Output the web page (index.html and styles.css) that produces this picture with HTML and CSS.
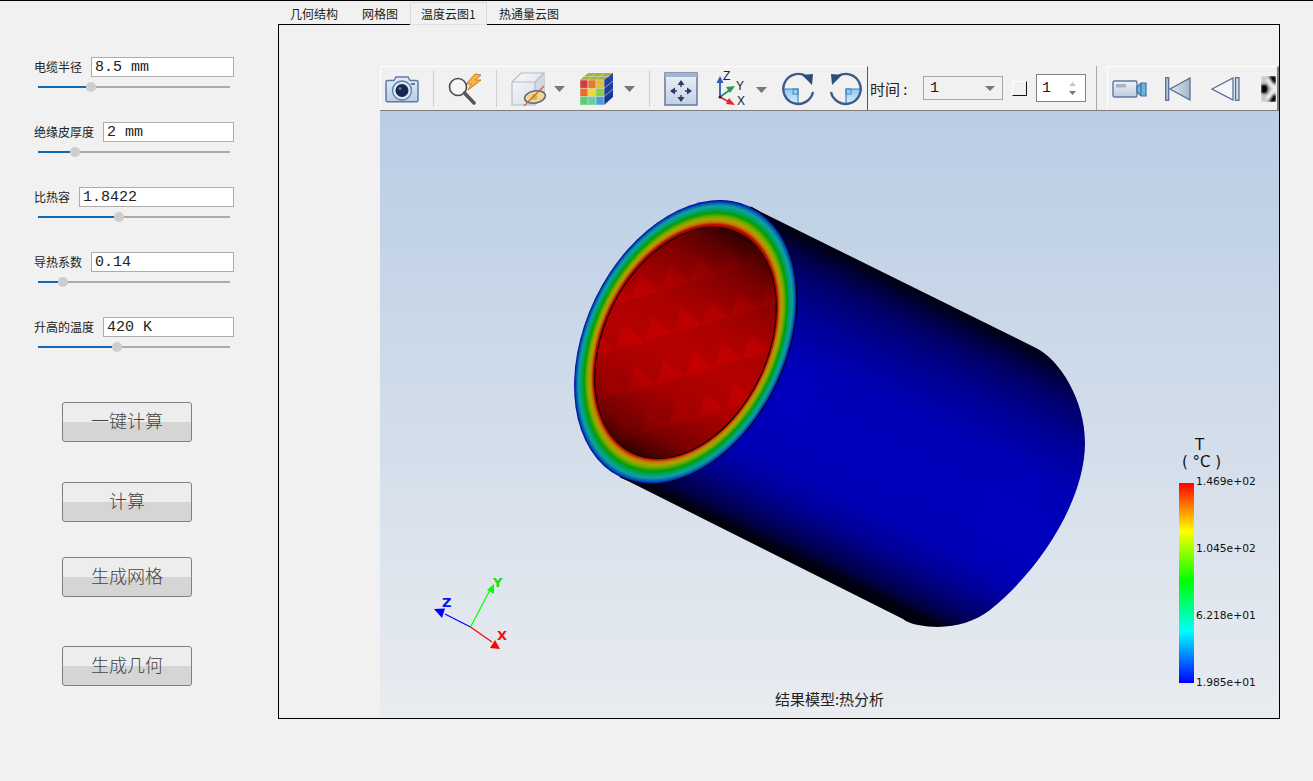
FILE: index.html
```html
<!DOCTYPE html>
<html lang="zh">
<head>
<meta charset="utf-8">
<title>热分析</title>
<link rel="stylesheet" href="styles.css">
</head>
<body>
<div class="app">
  <aside class="sidebar">
    <div class="param">
      <div class="param-row"><label class="param-label">电缆半径</label><div class="param-input">8.5 mm</div></div>
      <div class="slider"><div class="slider-fill" style="width:53px"><span class="slider-thumb"></span></div></div>
    </div>
    <div class="param">
      <div class="param-row"><label class="param-label">绝缘皮厚度</label><div class="param-input">2 mm</div></div>
      <div class="slider"><div class="slider-fill" style="width:37px"><span class="slider-thumb"></span></div></div>
    </div>
    <div class="param">
      <div class="param-row"><label class="param-label">比热容</label><div class="param-input">1.8422</div></div>
      <div class="slider"><div class="slider-fill" style="width:81px"><span class="slider-thumb"></span></div></div>
    </div>
    <div class="param">
      <div class="param-row"><label class="param-label">导热系数</label><div class="param-input">0.14</div></div>
      <div class="slider"><div class="slider-fill" style="width:25px"><span class="slider-thumb"></span></div></div>
    </div>
    <div class="param">
      <div class="param-row"><label class="param-label">升高的温度</label><div class="param-input">420 K</div></div>
      <div class="slider"><div class="slider-fill" style="width:79px"><span class="slider-thumb"></span></div></div>
    </div>
    <button class="action action-first">一键计算</button>
    <button class="action action-second">计算</button>
    <button class="action action-third">生成网格</button>
    <button class="action action-fourth">生成几何</button>
  </aside>

  <main class="main">
    <nav class="tabs">
      <span class="tab">几何结构</span>
      <span class="tab">网格图</span>
      <span class="tab tab-active">温度云图1</span>
      <span class="tab">热通量云图</span>
    </nav>
    <section class="pane">
      <div class="viewer">
        <div class="toolbar">
          <div class="tb-main">
            <svg class="icon" width="34" height="28" viewBox="0 0 34 28">
              <defs><linearGradient id="camBody" x1="0" y1="0" x2="0" y2="1"><stop offset="0" stop-color="#e4edf8"/><stop offset="1" stop-color="#b9cde8"/></linearGradient></defs>
              <path d="M2.500 5.500H9L11 2H23L25 5.500H31.500Q33 5.500 33 7V25Q33 26.800 31.500 26.800H2.500Q1 26.800 1 25V7Q1 5.500 2.500 5.500Z" fill="url(#camBody)" stroke="#5d7ba3" stroke-width="1.500"/>
              <circle cx="17" cy="15.500" r="9.500" fill="#dbe6f4" stroke="#5d7ba3" stroke-width="1.300"/>
              <circle cx="17" cy="15.500" r="6.500" fill="#15264f"/>
              <circle cx="15" cy="13.500" r="1.500" fill="#5d7ba3"/>
              <rect x="26" y="8" width="4" height="2" fill="#5d7ba3"/>
            </svg>
            <span class="tb-sep"></span>
            <svg class="icon" width="34" height="32" viewBox="0 0 34 32">
              <path d="M27 1L18 11H23L20 17L33 7H27L33 2Z" fill="#f6b54a" stroke="#d07c1c" stroke-width="1"/>
              <circle cx="10" cy="14" r="8.500" fill="#f4f6f8" stroke="#4c4c4c" stroke-width="1.600"/>
              <path d="M16.500 20L26 30" stroke="#555" stroke-width="3.600" stroke-linecap="round"/>
            </svg>
            <span class="tb-sep"></span>
            <svg class="icon" width="56" height="34" viewBox="0 0 56 34">
              <defs><linearGradient id="boxFace" x1="0" y1="0" x2="1" y2="1"><stop offset="0" stop-color="#f8f9fb"/><stop offset="1" stop-color="#d5dae2"/></linearGradient></defs>
              <path d="M1 10L10 1H33V23L24 33H1Z" fill="url(#boxFace)" stroke="#b4bcca" stroke-width="1.200"/>
              <path d="M24 10L33 1V23L24 33Z" fill="#d2d8e2"/>
              <path d="M1 10H24V33M24 10L33 1" fill="none" stroke="#b4bcca" stroke-width="1.200"/>
              <ellipse cx="24" cy="25" rx="10.500" ry="6" transform="rotate(-10 24 25)" fill="#f0d890" stroke="#54688a" stroke-width="1.500"/>
              <circle cx="23.500" cy="25" r="3" fill="#d8b45a"/>
              <path d="M13 34L33 14" stroke="#d8602c" stroke-width="1.300"/>
              <path d="M43 14H54L48.500 20Z" fill="#777"/>
            </svg>
            <svg class="icon icon-cube" width="55" height="32" viewBox="0 0 55 32">
              <defs><linearGradient id="cubeSide" x1="0" y1="0" x2="0" y2="1"><stop offset="0" stop-color="#2248b0"/><stop offset="1" stop-color="#123090"/></linearGradient></defs>
              <path d="M0 7L8 0H33L24 7Z" fill="#a8b040"/>
              <path d="M24 7L33 0V24L24 32Z" fill="url(#cubeSide)"/>
              <g stroke="#c8d4c0" stroke-width=".7">
                <rect x="0" y="7" width="8" height="8.300" fill="#d83838"/><rect x="8" y="7" width="8" height="8.300" fill="#e8782c"/><rect x="16" y="7" width="8" height="8.300" fill="#e0c030"/>
                <rect x="0" y="15.300" width="8" height="8.300" fill="#f0682c"/><rect x="8" y="15.300" width="8" height="8.300" fill="#f0d838"/><rect x="16" y="15.300" width="8" height="8.300" fill="#88d040"/>
                <rect x="0" y="23.600" width="8" height="8.400" fill="#58d070"/><rect x="8" y="23.600" width="8" height="8.400" fill="#68d0a0"/><rect x="16" y="23.600" width="8" height="8.400" fill="#40a0e0"/>
                <path d="M8 7L16 0M16 7L24 0M4 3.500H29M24 15.300L33 8M24 23.600L33 16" fill="none"/>
              </g>
              <path d="M44 13H55L49.500 19Z" fill="#777"/>
            </svg>
            <span class="tb-sep"></span>
            <svg class="icon" width="34" height="34" viewBox="0 0 34 34">
              <defs><linearGradient id="fitBg" x1="0" y1="0" x2="0" y2="1"><stop offset="0" stop-color="#eef2f8"/><stop offset="1" stop-color="#c2cfe4"/></linearGradient></defs>
              <rect x="1" y="1" width="32" height="32" fill="url(#fitBg)" stroke="#64799e" stroke-width="1.500"/>
              <rect x="1" y="1" width="32" height="4" fill="#a4b4d0"/>
              <path d="M17 10V28M8 19H26" stroke="#283c62" stroke-width="1.400" stroke-dasharray="5 8 5"/>
              <path d="M17 8L13.500 13H20.500ZM17 30L13.500 25H20.500ZM6 19L11 15.500V22.500ZM28 19L23 15.500V22.500Z" fill="#283c62"/>
            </svg>
            <svg class="icon icon-axes" width="145" height="34" viewBox="0 0 145 34">
              <defs><linearGradient id="rotFill" x1="0" y1="0" x2="0" y2="1"><stop offset="0" stop-color="#8cc8f0"/><stop offset="1" stop-color="#dcf0fc"/></linearGradient></defs>
              <path d="M3 25V8" stroke="#2c5cb8" stroke-width="1.800"/><path d="M3 4L-.500 11H6.500Z" fill="#2c5cb8"/>
              <path d="M3 25L14 17" stroke="#2a9a50" stroke-width="2"/><path d="M18 14L9 15L13 21Z" fill="#2a9a50"/>
              <path d="M3 25L14 31" stroke="#e02828" stroke-width="1.800"/><path d="M18 33L9 32L12 26Z" fill="#e02828"/>
              <circle cx="3" cy="25" r="1.500" fill="#222"/>
              <text class="axis-mini" x="6" y="8">Z</text><text class="axis-mini" x="19" y="18">Y</text><text class="axis-mini" x="20" y="33">X</text>
              <path d="M39 15H50L44.500 21Z" fill="#777"/>
              <g>
                <path d="M66 17A15 15 0 0 0 81 32V17Z" fill="url(#rotFill)"/>
                <path d="M66 17H81V32" fill="none" stroke="#3f86c4" stroke-width="1.200"/>
                <rect x="76" y="17" width="5" height="5" fill="none" stroke="#3f86c4"/>
                <path d="M96 20A15 15 0 1 1 89 4" fill="none" stroke="#3d5d88" stroke-width="2.400"/>
                <path d="M85 3L96 2L95 13Z" fill="#2e4c78"/>
              </g>
              <g transform="translate(210 0) scale(-1 1)">
                <path d="M66 17A15 15 0 0 0 81 32V17Z" fill="url(#rotFill)"/>
                <path d="M66 17H81V32" fill="none" stroke="#3f86c4" stroke-width="1.200"/>
                <rect x="76" y="17" width="5" height="5" fill="none" stroke="#3f86c4"/>
                <path d="M96 20A15 15 0 1 1 89 4" fill="none" stroke="#3d5d88" stroke-width="2.400"/>
                <path d="M85 3L96 2L95 13Z" fill="#2e4c78"/>
              </g>
            </svg>
          </div>
          <div class="tb-time">
            <span class="time-label">时间 :</span>
            <div class="combo"><span>1</span><i class="combo-arrow"></i></div>
            <span class="check"></span>
            <div class="spin"><span>1</span>
              <svg class="spin-arrows" width="9" height="16" viewBox="0 0 9 16"><path d="M4.500 1L8 5H1Z" fill="#c4c4c4"/><path d="M4.500 14L8 10H1Z" fill="#777"/></svg>
            </div>
            <span class="tb-sep tb-sep-end"></span>
          </div>
          <div class="tb-play">
            <svg class="icon" width="35" height="20" viewBox="0 0 35 20">
              <defs><linearGradient id="camcord" x1="0" y1="0" x2="0" y2="1"><stop offset="0" stop-color="#f0f3f8"/><stop offset="1" stop-color="#bccbe0"/></linearGradient></defs>
              <rect x="1" y="2" width="24" height="16" rx="1.500" fill="url(#camcord)" stroke="#5a7aa4" stroke-width="1.400"/>
              <rect x="4" y="5" width="10" height="3.500" fill="#a8b4c4"/>
              <path d="M25 8L29 4H34V17H29L25 13Z" fill="#64b8e4" stroke="#4c6c98" stroke-width="1.200"/>
              <path d="M29 4V17" stroke="#4c6c98" stroke-width="1.200"/>
            </svg>
            <svg class="icon icon-first" width="26" height="24" viewBox="0 0 26 24">
              <defs><linearGradient id="triGray" x1="0" y1="0" x2="1" y2="0"><stop offset="0" stop-color="#e0e6ee"/><stop offset="1" stop-color="#a8b6c8"/></linearGradient></defs>
              <rect x=".7" y=".7" width="3" height="22.600" fill="#b4c4dc" stroke="#4a6a94" stroke-width="1.200"/>
              <path d="M5 12L25 1V23Z" fill="url(#triGray)" stroke="#4a6a94" stroke-width="1.200"/>
            </svg>
            <svg class="icon icon-prev" width="29" height="24" viewBox="0 0 29 24">
              <path d="M1 12L22 1V23Z" fill="#f4f6f9" stroke="#4a6a94" stroke-width="1.200"/>
              <rect x="24.500" y=".7" width="3.500" height="22.600" fill="#d0dae8" stroke="#4a6a94" stroke-width="1.200"/>
            </svg>
            <svg class="icon icon-next" width="15" height="26" viewBox="0 0 15 26">
              <defs><filter id="soft" x="-20%" y="-20%" width="140%" height="140%"><feGaussianBlur stdDeviation=".8"/></filter></defs>
              <g filter="url(#soft)">
                <rect width="15" height="26" fill="#c8c8c8"/>
                <path d="M7 0H15V8L12 8ZM7 26H15V18L12 18ZM0 8H6L8 13L6 18H0Z" fill="#050505"/>
                <path d="M6 3L14 13L6 23" fill="none" stroke="#f4f4f4" stroke-width="3"/>
              </g>
            </svg>
          </div>
        </div>

        <div class="view">
          <svg class="scene" viewBox="380 111 899 606" width="899" height="606">
            <defs>
              <linearGradient id="shell" gradientUnits="userSpaceOnUse" x1="751" y1="207" x2="620" y2="477">
                <stop offset="0" stop-color="#00000c"/><stop offset=".03" stop-color="#000024"/>
                <stop offset=".07" stop-color="#000048"/><stop offset=".12" stop-color="#000068"/>
                <stop offset=".18" stop-color="#000080"/><stop offset=".25" stop-color="#000098"/>
                <stop offset=".32" stop-color="#0000a8"/><stop offset=".40" stop-color="#0000b6"/>
                <stop offset=".55" stop-color="#0000bc"/><stop offset=".72" stop-color="#0000b8"/>
                <stop offset=".80" stop-color="#0000a0"/><stop offset=".85" stop-color="#000088"/>
                <stop offset=".90" stop-color="#000068"/><stop offset=".95" stop-color="#000040"/>
                <stop offset=".98" stop-color="#000014"/><stop offset="1" stop-color="#00000a"/>
              </linearGradient>
              <radialGradient id="ring">
                <stop offset=".815" stop-color="#a00000"/>
                <stop offset=".828" stop-color="#b81000"/>
                <stop offset=".845" stop-color="#c07800"/>
                <stop offset=".865" stop-color="#b0a000"/>
                <stop offset=".885" stop-color="#70a800"/>
                <stop offset=".91" stop-color="#00a000"/>
                <stop offset=".93" stop-color="#00a060"/>
                <stop offset=".958" stop-color="#10a0a0"/>
                <stop offset=".98" stop-color="#0060b0"/>
                <stop offset="1" stop-color="#0000a0"/>
              </radialGradient>
              <linearGradient id="bore" gradientUnits="userSpaceOnUse" x1="746" y1="226" x2="626" y2="462">
                <stop offset="0" stop-color="#200000"/><stop offset=".05" stop-color="#3c0000"/>
                <stop offset=".12" stop-color="#680000"/><stop offset=".20" stop-color="#8c0000"/>
                <stop offset=".30" stop-color="#a80000"/><stop offset=".40" stop-color="#bc0000"/>
                <stop offset=".55" stop-color="#c40000"/><stop offset=".68" stop-color="#b80000"/>
                <stop offset=".78" stop-color="#9c0000"/><stop offset=".86" stop-color="#800000"/>
                <stop offset=".93" stop-color="#500000"/><stop offset="1" stop-color="#100000"/>
              </linearGradient>
              <pattern id="facets" patternUnits="userSpaceOnUse" width="30" height="44" patternTransform="rotate(-16)">
                <path d="M0 0H30L15 22ZM15 22H45L30 44H0Z" fill="#000" fill-opacity=".08"/>
                <path d="M-15 22H15L0 44Z" fill="#000" fill-opacity=".08"/>
              </pattern>
              <clipPath id="boreClip"><ellipse cx="685.500" cy="343" rx="122" ry="81.800" transform="rotate(-64.200 685.500 343)"/></clipPath>
              <linearGradient id="legend" x1="0" y1="0" x2="0" y2="1">
                <stop offset="0" stop-color="#ff0000"/><stop offset=".24" stop-color="#ffff00"/>
                <stop offset=".49" stop-color="#00ff00"/><stop offset=".74" stop-color="#00ffff"/>
                <stop offset="1" stop-color="#0000ff"/>
              </linearGradient>
            </defs>

            <path d="M751 207L1036 348C1060 360 1085 400 1085 443C1085 500 1040 570 990 610C970 625 945 630 918 625Q908 623 903 619L620 477Z" fill="url(#shell)"/>
            <path d="M1000 440L1050 480L1040 550L1000 590L960 560L990 500Z" fill="#0000c4" fill-opacity=".25"/>
            <path d="M790 350L830 370L800 420L780 410Z" fill="#0000c8" fill-opacity=".3"/>

            <ellipse cx="685.500" cy="342" rx="150" ry="100.300" transform="rotate(-64.200 685.500 342)" fill="url(#ring)"/>
            <path d="M-150 0A150 100.300 0 0 0 150 0" transform="translate(685.500 342) rotate(-64.200)" fill="none" stroke="#000010" stroke-width="1"/>
            <g clip-path="url(#boreClip)">
              <rect x="580" y="220" width="210" height="245" fill="url(#bore)"/>
              <rect x="580" y="220" width="210" height="245" fill="url(#facets)"/>
            </g>
            <ellipse cx="685.500" cy="343" rx="122" ry="81.800" transform="rotate(-64.200 685.500 343)" fill="none" stroke="#100000" stroke-width="1.100"/>

            <g class="triad">
              <path d="M470.500 627L445 614" stroke="#0000ff"/>
              <path d="M434 609L445 608.500L442 618Z" fill="#0000ff"/>
              <path d="M470.500 627L490 590" stroke="#00ff00"/>
              <path d="M494 584L487 590L494 594Z" fill="#00ff00"/>
              <path d="M470.500 627L492 642" stroke="#ff0000"/>
              <path d="M500 649L490 648L495 640Z" fill="#ff0000"/>
              <text class="axis-z" x="442" y="607">Z</text>
              <text class="axis-y" x="493" y="587">Y</text>
              <text class="axis-x" x="497" y="640">X</text>
            </g>

            <text class="legend-title" x="1195" y="450">T</text>
            <text class="legend-title" x="1182" y="467">( °C )</text>
            <rect x="1179" y="483" width="15" height="200" fill="url(#legend)"/>
            <text class="legend-tick" x="1196" y="485">1.469e+02</text>
            <text class="legend-tick" x="1196" y="552">1.045e+02</text>
            <text class="legend-tick" x="1196" y="619">6.218e+01</text>
            <text class="legend-tick" x="1196" y="686">1.985e+01</text>

            <text class="caption" x="829.500" y="705">结果模型:热分析</text>
          </svg>
        </div>
      </div>
    </section>
  </main>
</div>
</body>
</html>
```
FILE: styles.css
```css
* { box-sizing: border-box; }
html, body { margin: 0; height: 100%; }
body {
  background: #f1f1f1;
  color: #1a1a1a;
  font-family: "Noto Sans CJK SC", "Liberation Sans", sans-serif;
  overflow: hidden;
}
.app {
  display: flex;
  height: 781px;
  border-top: 1px solid #000;
}

/* left parameter column */
.sidebar {
  width: 278px;
  flex: none;
  padding: 56px 0 0 34px;
  display: flex;
  flex-direction: column;
}
.param { width: 200px; height: 36px; margin-bottom: 29px; }
.param-row { display: flex; align-items: center; gap: 9px; height: 20px; }
.param-label { font-size: 12px; line-height: 20px; white-space: nowrap; color: #222; }
.param-input {
  flex: 1;
  height: 20px;
  background: #fff;
  border: 1px solid #adadad;
  padding: 1px 0 0 3px;
  font: 15px/18px "Liberation Mono", "Noto Sans CJK SC", monospace;
  color: #222;
}
.slider {
  position: relative;
  width: 192px;
  height: 2px;
  margin: 9px 0 0 4px;
  background: #ababab;
}
.slider-fill { position: relative; height: 2px; background: #0f67b8; }
.slider-thumb {
  position: absolute;
  right: -5px;
  top: -4px;
  width: 10px;
  height: 10px;
  border-radius: 50%;
  background: #cdcdcd;
  outline: 1px dotted #d4d4d4;
  outline-offset: -1px;
}
.action {
  width: 130px;
  height: 40px;
  margin-left: 28px;
  padding: 0 0 4px;
  border: 1px solid #808080;
  border-radius: 3px;
  background: linear-gradient(#ededed 0, #ededed 50%, #d5d5d5 50%, #d5d5d5 100%);
  font: 300 18px/30px "Noto Sans CJK SC", sans-serif;
  color: #444;
}
.action-first { margin-top: 20px; }
.action-second { margin-top: 40px; }
.action-third { margin-top: 35px; }
.action-fourth { margin-top: 49px; }

/* tabs */
.main { width: 1002px; flex: none; display: flex; flex-direction: column; }
.tabs { display: flex; align-items: flex-end; height: 23px; }
.tab {
  height: 22px;
  padding: 0 12px;
  font-size: 12px;
  line-height: 23px;
  color: #222;
  white-space: nowrap;
}
.tab-active {
  position: relative;
  z-index: 1;
  width: 77px;
  margin-bottom: -1px;
  height: 23px;
  padding: 0 0 0 10px;
  background: #f1f1f1;
  border: 1px solid #dadada;
  border-bottom-color: #e0e0e0;
  line-height: 22px;
}
.pane {
  height: 695px;
  border: 1px solid #000;
  padding: 41px 0 0 101px;
}
.viewer { height: 100%; display: flex; flex-direction: column; }

/* toolbar */
.toolbar {
  display: flex;
  height: 45px;
  flex: none;
  background: #f1f1f1;
  border-bottom: 1px solid #7d7d7d;
}
.tb-main {
  width: 488px;
  display: flex;
  align-items: center;
  padding-left: 5px;
  border-top: 1px solid #fff;
  border-left: 1px solid #fff;
  border-right: 1px solid #555;
}
.tb-main .icon:first-child { margin-left: -1px; }
.icon { display: block; flex: none; }
.icon-cube { margin-left: 13px; }
.icon-axes { margin-left: 19px; overflow: visible; }
.tb-sep { width: 1px; height: 37px; margin: 0 14px; flex: none; background: #d0d0d0; }
.axis-mini { font: 12px "Liberation Sans", sans-serif; fill: #222; }
.tb-time { width: 239px; display: flex; align-items: center; flex: none; }
.time-label { margin-left: 2px; width: 42px; font-size: 15px; color: #222; white-space: nowrap; }
.combo {
  width: 80px;
  height: 24px;
  margin-left: 11px;
  padding: 1px 7px 0 6px;
  display: flex;
  align-items: center;
  justify-content: space-between;
  background: #f1f1f1;
  border: 1px solid #a6a6a6;
  font: 15px "Liberation Mono", monospace;
}
.combo-arrow {
  width: 0;
  height: 0;
  border: 5px solid transparent;
  border-top: 5px solid #777;
  border-bottom: 0;
}
.check {
  width: 15px;
  height: 15px;
  margin-left: 9px;
  flex: none;
  background: #f1f1f1;
  border-top: 1px solid #fff;
  border-left: 1px solid #fff;
  border-right: 1px solid #111;
  border-bottom: 1px solid #111;
}
.spin {
  width: 50px;
  height: 28px;
  margin-left: 9px;
  padding: 1px 8px 0 5px;
  display: flex;
  align-items: center;
  justify-content: space-between;
  background: #fff;
  border: 1px solid #808080;
  font: 15px "Liberation Mono", monospace;
}
.tb-sep-end { margin: 0 0 0 10px; height: 44px; background: #a8a8a8; }
.tb-play {
  flex: 1;
  min-width: 0;
  display: flex;
  align-items: center;
  padding-left: 4px;
  border-top: 1px solid #fff;
  border-left: 1px solid #fff;
  border-right: 2px solid #808080;
  overflow: hidden;
}
.icon-first { margin-left: 18px; }
.icon-prev { margin-left: 20px; }
.icon-next { margin-left: 21px; }

/* 3D view */
.view {
  position: relative;
  flex: 1;
  min-height: 0;
  background: linear-gradient(#b9cde4, #e9ecf0);
}
.scene { position: absolute; left: 0; top: 0; display: block; }
.triad path[stroke] { stroke-width: 1.200; fill: none; }
.axis-z, .axis-y, .axis-x { font: bold 13px "DejaVu Sans", sans-serif; }
.axis-z { fill: #1010e0; }
.axis-y { fill: #10e010; }
.axis-x { fill: #f01010; }
.legend-title { font: 15px "DejaVu Sans", sans-serif; fill: #111; }
.legend-tick { font: 10.700px "DejaVu Sans", sans-serif; fill: #111; }
.caption { font: 15px "Noto Sans CJK SC", sans-serif; fill: #222; text-anchor: middle; }
```
